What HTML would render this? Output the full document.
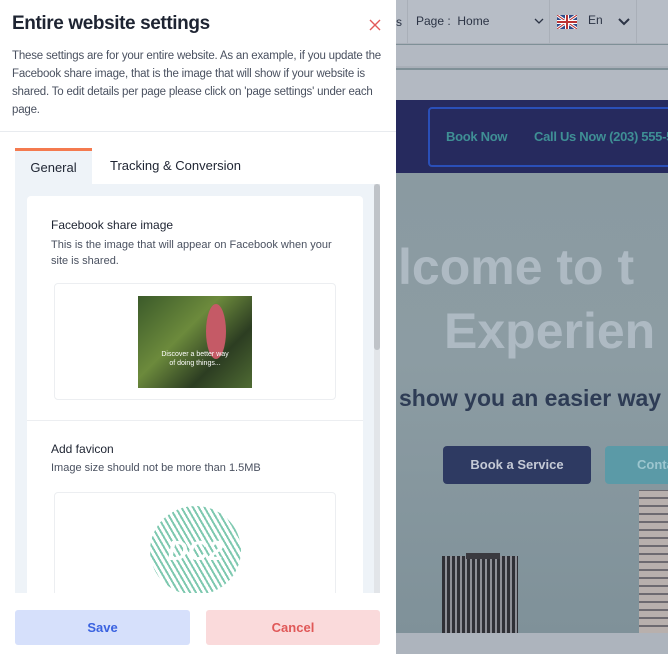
<!DOCTYPE html>
<html><head><meta charset="utf-8"><style>
*{box-sizing:border-box;margin:0;padding:0}
body{width:668px;height:654px;overflow:hidden;position:relative;font-family:"Liberation Sans",sans-serif;background:#7f9097}
.bg{position:absolute;left:396px;top:0;width:272px;height:654px;overflow:hidden}
.panel{position:absolute;left:0;top:0;width:396px;height:654px;background:#fff}
</style></head><body>
<div class="bg">
  <div style="position:absolute;left:0;top:0;width:272px;height:44px;background:#b7bdc6;border-bottom:1px solid #aab0b9"></div>
  <div style="position:absolute;left:0;top:0;width:12px;height:44px;border-right:1px solid #a9afb8;font-size:12px;color:#2c3445;padding-top:15px">s</div>
  <div style="position:absolute;left:20px;top:14px;font-size:12px;color:#2c3445">Page :&nbsp; Home</div>
  <svg style="position:absolute;left:138px;top:18px" width="10" height="7"><path d="M1 1L5 5L9 1" stroke="#2c3445" stroke-width="1.3" fill="none"/></svg>
  <div style="position:absolute;left:153px;top:0;width:1px;height:44px;background:#a9afb8"></div>
  <svg style="position:absolute;left:161px;top:15px" width="20" height="14" viewBox="0 0 20 14"><rect width="20" height="14" fill="#2d4a8a"/><path d="M0 0L20 14M20 0L0 14" stroke="#fff" stroke-width="3"/><path d="M0 0L20 14M20 0L0 14" stroke="#b33" stroke-width="1"/><rect x="8" width="4" height="14" fill="#fff"/><rect y="5" width="20" height="4" fill="#fff"/><rect x="9" width="2" height="14" fill="#b33"/><rect y="6" width="20" height="2" fill="#b33"/></svg>
  <div style="position:absolute;left:192px;top:13px;font-size:12px;color:#2c3445">En</div>
  <svg style="position:absolute;left:222px;top:18px" width="12" height="8"><path d="M1 1L6 6L11 1" stroke="#2c3445" stroke-width="2" fill="none"/></svg>
  <div style="position:absolute;left:240px;top:0;width:1px;height:44px;background:#a9afb8"></div>
  <div style="position:absolute;left:0;top:45px;width:272px;height:23px;background:#b3b9c2;border-bottom:2px solid #a9afb8"></div>
  <div style="position:absolute;left:0;top:70px;width:272px;height:30px;background:#b3b9c2"></div>
  <div style="position:absolute;left:0;top:100px;width:272px;height:73px;background:#262a5e"></div>
  <div style="position:absolute;left:32px;top:107px;width:250px;height:60px;border:2px solid #2a4fb8;border-radius:4px"></div>
  <div style="position:absolute;left:50px;top:129px;font-size:13px;font-weight:bold;color:#3f8f95;letter-spacing:-0.3px">Book Now</div>
  <div style="position:absolute;left:138px;top:129px;font-size:13px;font-weight:bold;color:#3f8f95;white-space:nowrap;letter-spacing:-0.3px">Call Us Now (203) 555-5</div>
  <div style="position:absolute;left:0;top:173px;width:272px;height:460px;background:linear-gradient(#8a9aa1,#8c9ca3 40%,#7f9199)"></div>
  <div style="position:absolute;left:2px;top:238px;font-size:50px;font-weight:bold;color:#aebac3;white-space:nowrap;letter-spacing:0px">lcome to t</div>
  <div style="position:absolute;left:48px;top:302px;font-size:50px;font-weight:bold;color:#aebac3;white-space:nowrap;letter-spacing:0px">Experien</div>
  <div style="position:absolute;left:3px;top:385px;font-size:23px;font-weight:bold;color:#2e3c55;white-space:nowrap;letter-spacing:0px">show you an easier way</div>
  <div style="position:absolute;left:47px;top:446px;width:148px;height:38px;background:#2e3a62;border-radius:4px;color:#c5cad6;font-size:13px;font-weight:bold;text-align:center;line-height:38px">Book a Service</div>
  <div style="position:absolute;left:209px;top:446px;width:80px;height:38px;background:#5b9aa7;border-radius:4px;color:#9cc6cf;font-size:13px;font-weight:bold;line-height:38px;padding-left:32px">Conta</div>
  <div style="position:absolute;left:46px;top:556px;width:76px;height:77px;background:repeating-linear-gradient(90deg,#2f3036 0 3px,#8d8f96 3px 5px)"></div>
  <div style="position:absolute;left:70px;top:553px;width:34px;height:6px;background:#3a3a40"></div>
  <div style="position:absolute;left:243px;top:490px;width:29px;height:143px;background:repeating-linear-gradient(0deg,#b8b0ad 0 6px,#6d6a70 6px 8px)"></div>
  <div style="position:absolute;left:0;top:633px;width:272px;height:21px;background:#adb4bd"></div>
</div>
<div class="panel">
  <div style="position:absolute;left:12px;top:13px;font-size:19px;font-weight:bold;color:#1e2432;letter-spacing:-0.4px">Entire website settings</div>
  <svg style="position:absolute;left:369px;top:19px" width="12" height="12"><path d="M1 1L11 11M11 1L1 11" stroke="#e25a5a" stroke-width="1.4"/></svg>
  <div style="position:absolute;left:12px;top:47px;width:380px;font-size:11.5px;line-height:18px;color:#4a5160;letter-spacing:-0.2px">These settings are for your entire website. As an example, if you update the Facebook share image, that is the image that will show if your website is shared. To edit details per page please click on 'page settings' under each page.</div>
  <div style="position:absolute;left:0;top:131px;width:396px;height:1px;background:#e8ebef"></div>
  <div style="position:absolute;left:15px;top:148px;width:77px;height:36px;background:#eef3f8;border-top:3px solid #f47a4f;font-size:13px;color:#1e2432;text-align:center;line-height:33px">General</div>
  <div style="position:absolute;left:110px;top:158px;font-size:13px;color:#1e2432">Tracking &amp; Conversion</div>
  <div style="position:absolute;left:15px;top:184px;width:365px;height:409px;background:#eef3f8;overflow:hidden">
    <div style="position:absolute;left:12px;top:12px;width:336px;height:420px;background:#fff;border-radius:4px">
      <div style="position:absolute;left:24px;top:22px;font-size:12px;color:#1e2432">Facebook share image</div>
      <div style="position:absolute;left:24px;top:41px;width:290px;font-size:11px;line-height:16px;color:#4a5160">This is the image that will appear on Facebook when your site is shared.</div>
      <div style="position:absolute;left:27px;top:87px;width:282px;height:117px;border:1px solid #eceef1;border-radius:4px"></div>
      <div style="position:absolute;left:111px;top:100px;width:114px;height:92px;background:linear-gradient(135deg,#3b5a2a,#6c8a3c 40%,#2c3d22 70%,#4f6b33);overflow:hidden">
        <div style="position:absolute;left:68px;top:8px;width:20px;height:55px;background:#c55a66;border-radius:50%"></div>
        <div style="position:absolute;left:0;top:54px;width:114px;text-align:center;font-size:7px;color:#fff;line-height:9px">Discover a better way<br>of doing things...</div>
      </div>
      <div style="position:absolute;left:0;top:224px;width:336px;height:1px;background:#eceef1"></div>
      <div style="position:absolute;left:24px;top:246px;font-size:12px;color:#1e2432">Add favicon</div>
      <div style="position:absolute;left:24px;top:266px;font-size:11px;color:#4a5160">Image size should not be more than 1.5MB</div>
      <div style="position:absolute;left:27px;top:296px;width:282px;height:130px;border:1px solid #eceef1;border-radius:4px"></div>
      <div style="position:absolute;left:123px;top:310px;width:91px;height:89px;border-radius:50%;background:repeating-linear-gradient(60deg,#7fc9b0 0 2px,#fff 2px 5px);font-size:28px;font-weight:bold;color:#fff;text-align:center;line-height:89px;font-style:italic">DC2</div>
    </div>
    <div style="position:absolute;left:359px;top:0;width:6px;height:409px;background:#e2e5e9"></div>
    <div style="position:absolute;left:359px;top:0;width:6px;height:166px;background:#bfc3c8;border-radius:3px"></div>
  </div>
  <div style="position:absolute;left:15px;top:610px;width:175px;height:35px;background:#d6e0fb;border-radius:3px;color:#3a62e0;font-size:13px;font-weight:bold;text-align:center;line-height:35px">Save</div>
  <div style="position:absolute;left:206px;top:610px;width:174px;height:35px;background:#fadadb;border-radius:3px;color:#e05858;font-size:13px;font-weight:bold;text-align:center;line-height:35px">Cancel</div>
</div>
</body></html>
